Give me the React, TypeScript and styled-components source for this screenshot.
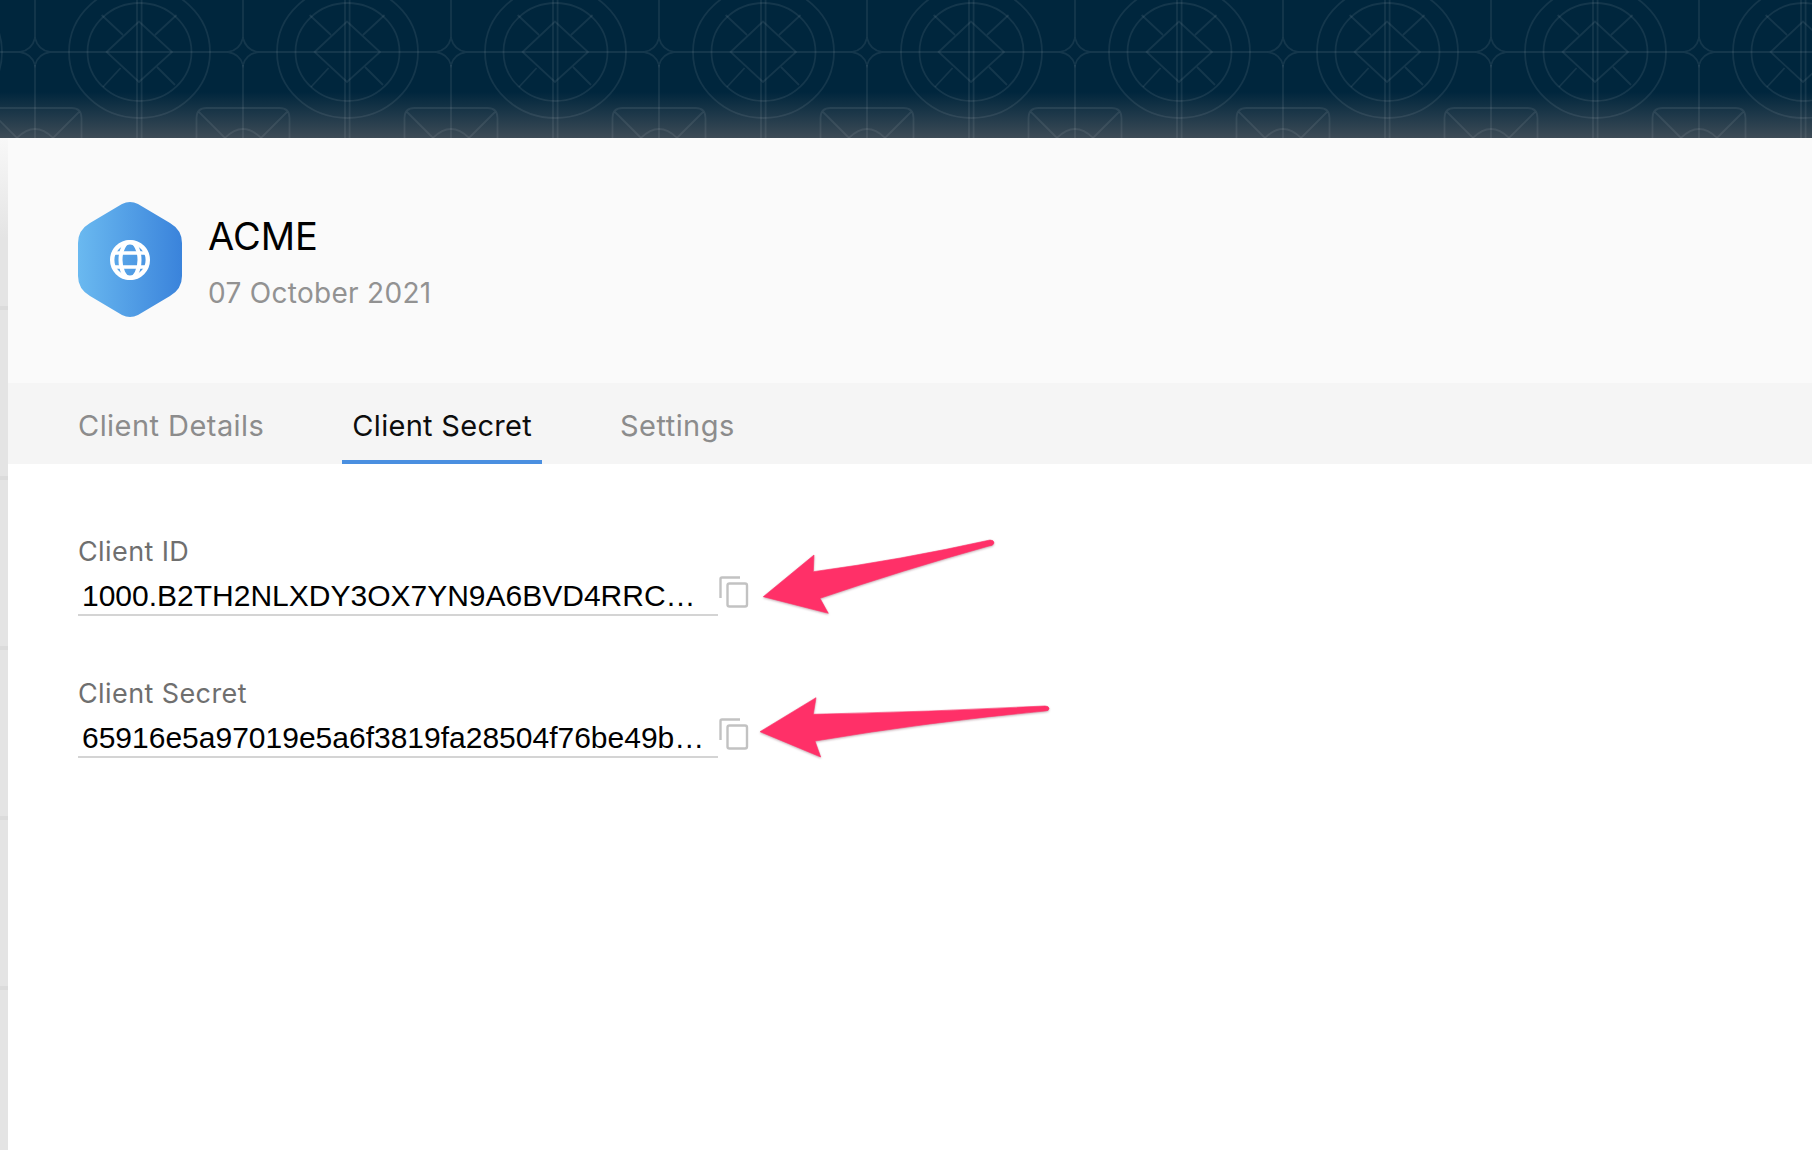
import styled, { createGlobalStyle } from "styled-components";

const GlobalStyle = createGlobalStyle`
  html, body {
    margin: 0;
    padding: 0;
    background: #fff;
  }
`;

const Page = styled.div`
  width: 100%;
  height: 1150px;
  overflow: hidden;
  display: flex;
  flex-direction: column;
  font-family: Inter, "Open Sans", sans-serif;
`;

const Banner = styled.header`
  position: relative;
  flex: 0 0 138px;
  overflow: hidden;
  background: linear-gradient(to bottom, #00263d 0, #00263d 92px, #3d4b56 138px);
`;

const PatternSvg = styled.svg`
  position: absolute;
  inset: 0;
  width: 100%;
  height: 100%;
`;

const Body = styled.div`
  flex: 1;
  display: flex;
  min-height: 0;
`;

const Sidebar = styled.aside`
  flex: 0 0 8px;
  display: flex;
  flex-direction: column;
  background: linear-gradient(to bottom, #f8f8f8 0, #e4e4e4 100px);
`;

const SideRow = styled.div<{ $height: number }>`
  flex: 0 0 ${(p) => p.$height}px;
  box-sizing: border-box;
  border-bottom: 4px solid #dbdbdb;
`;

const Panel = styled.main`
  flex: 1;
  display: flex;
  flex-direction: column;
  background: #fff;
`;

const Header = styled.section`
  flex: 0 0 245px;
  box-sizing: border-box;
  padding: 64px 0 0 70px;
  display: flex;
  align-items: flex-start;
  gap: 26px;
  background: #fafafa;
`;

const HexSvg = styled.svg`
  flex: none;
  width: 104px;
  height: 115px;
`;

const HeaderText = styled.div`
  display: flex;
  flex-direction: column;
`;

const Name = styled.h1`
  margin: 12px 0 0;
  font-size: 38px;
  line-height: 44px;
  font-weight: 400;
  color: #000;
`;

const DateLine = styled.div`
  margin-top: 19px;
  font-size: 28px;
  letter-spacing: 0.3px;
  line-height: 32px;
  color: #929292;
`;

const Tabs = styled.nav`
  flex: 0 0 81px;
  box-sizing: border-box;
  padding-left: 60px;
  display: flex;
  gap: 68px;
  background: #f5f5f5;
`;

const Tab = styled.div<{ $active?: boolean }>`
  box-sizing: border-box;
  height: 81px;
  padding: 27px 10px 0;
  font-size: 29px;
  letter-spacing: ${(p) => (p.$active ? "0.3px" : "0.45px")};
  line-height: 32px;
  color: ${(p) => (p.$active ? "#0d0d0d" : "#8c8c8c")};
  border-bottom: 4px solid ${(p) => (p.$active ? "#4a8fe0" : "transparent")};
`;

const Fields = styled.section`
  padding: 73px 0 0 70px;
  display: flex;
  flex-direction: column;
  gap: 63px;
`;

const Field = styled.div`
  display: flex;
  flex-direction: column;
`;

const Label = styled.label`
  font-size: 27px;
  letter-spacing: 0.4px;
  line-height: 30px;
  color: #6f6f6f;
`;

const Row = styled.div`
  position: relative;
  display: flex;
  align-items: flex-end;
  margin-top: 3px;
`;

const Value = styled.div`
  box-sizing: border-box;
  width: 640px;
  height: 46px;
  padding: 8px 0 0 4px;
  font-family: "Liberation Sans", Arial, sans-serif;
  font-size: 30px;
  line-height: 36px;
  color: #000;
  border-bottom: 2px solid #d4d4d4;
  white-space: nowrap;
`;

const CopyIcon = styled.svg`
  flex: none;
  width: 30px;
  height: 34px;
  margin: 0 0 6px 1px;
`;

const ArrowSvg = styled.svg`
  position: absolute;
  left: 600px;
  top: -40px;
  width: 400px;
  height: 120px;
  overflow: visible;
  filter: drop-shadow(0 1px 1px rgba(90, 20, 40, 0.35));
`;

const Hexagon = () => (
  <HexSvg viewBox="0 0 104 115">
    <defs>
      <linearGradient id="hexFill" x1="0" y1="0" x2="1" y2="0">
        <stop offset="0" stopColor="#6ab9f0" />
        <stop offset="1" stopColor="#3a83db" />
      </linearGradient>
    </defs>
    <path
      d="M44 2 Q52 -2 60 2 L92 21 Q104 28 104 41 L104 74 Q104 87 92 94 L60 113 Q52 117 44 113 L12 94 Q0 87 0 74 L0 41 Q0 28 12 21 Z"
      fill="url(#hexFill)"
    />
    <g fill="none" stroke="#fff">
      <circle cx="52" cy="58" r="17.8" strokeWidth="4.4" />
      <ellipse cx="52" cy="58" rx="9.5" ry="18" strokeWidth="4" />
      <path d="M35 51 H69 M35 65 H69" strokeWidth="3.6" />
    </g>
  </HexSvg>
);

const Copy = () => (
  <CopyIcon viewBox="0 0 30 34" fill="none" stroke="#c2c2c2" strokeWidth="2.4">
    <path d="M1.5 22 V3 Q1.5 1.5 3 1.5 H21" />
    <rect x="8.5" y="7.5" width="19.5" height="23" rx="2" />
  </CopyIcon>
);

// motif repeats every 208px, star centres on x=35
const Motif = ({ x }: { x: number }) => (
  <g transform={`translate(${x} 0)`}>
    <path d="M0 0 V38 M0 65 V138" />
    <path d="M0 38 Q3 50 15 52 Q3 54 0 65 Q-3 54 -15 52 Q-3 50 0 38 Z" />
    <path d="M15 52 H193" />
    <path d="M102 0 V138 M106.6 0 V138" />
    <ellipse cx="104.5" cy="52" rx="70.5" ry="66" />
    <ellipse cx="104.5" cy="52" rx="52" ry="49" />
    <path d="M71.6 52 L104 21.6 L137 52 L104 82 Z" />
    <path d="M66.6 15 L88 35 M141.6 15 L120 35 M68 87 L85.6 68 M140 85 L122 67" />
    <path d="M-46.5 140 V118 Q-46.5 108 -36.5 108 H36.5 Q46.5 108 46.5 118 V140" />
    <path d="M-44 112 L-18 138 M44 112 L18 138" />
    <path d="M-18 138 Q0 120 18 138" />
  </g>
);

const motifs = [-173, 35, 243, 451, 659, 867, 1075, 1283, 1491, 1699, 1907];

const Pattern = () => (
  <PatternSvg fill="none" stroke="rgba(255,255,255,0.08)" strokeWidth="1.8">
    {motifs.map((x) => (
      <Motif key={x} x={x} />
    ))}
  </PatternSvg>
);

const Arrow = ({ d }: { d: string }) => (
  <ArrowSvg viewBox="0 0 400 120">
    <path d={d} fill="#ff3068" stroke="#ff3068" strokeWidth="0.6" strokeLinejoin="round" />
  </ArrowSvg>
);

const sideRows = [172, 170, 170, 170, 170];

export default function App() {
  return (
    <Page>
      <GlobalStyle />
      <Banner>
        <Pattern />
      </Banner>
      <Body>
        <Sidebar>
          {sideRows.map((h, i) => (
            <SideRow key={i} $height={h} />
          ))}
        </Sidebar>
        <Panel>
          <Header>
            <Hexagon />
            <HeaderText>
              <Name>ACME</Name>
              <DateLine>07 October 2021</DateLine>
            </HeaderText>
          </Header>
          <Tabs>
            <Tab>Client Details</Tab>
            <Tab $active>Client Secret</Tab>
            <Tab>Settings</Tab>
          </Tabs>
          <Fields>
            <Field>
              <Label>Client ID</Label>
              <Row>
                <Value>1000.B2TH2NLXDY3OX7YN9A6BVD4RRC…</Value>
                <Copy />
                <Arrow d="M85.3 66.7 L136 25 L135.3 41.7 Q222 30 312 10 Q316 10 316 13 Q315 16 311 16 Q225 40 142 68.3 L150.3 83.3 Z" />
              </Row>
            </Field>
            <Field>
              <Label>Client Secret</Label>
              <Row>
                <Value>65916e5a97019e5a6f3819fa28504f76be49b…</Value>
                <Copy />
                <Arrow d="M82 59.7 L138 25.7 L135.3 42.3 Q250 40 367 34 Q371 34 371 36.5 Q371 39 367 39 Q250 50 137 69 L142.7 85 Z" />
              </Row>
            </Field>
          </Fields>
        </Panel>
      </Body>
    </Page>
  );
}
